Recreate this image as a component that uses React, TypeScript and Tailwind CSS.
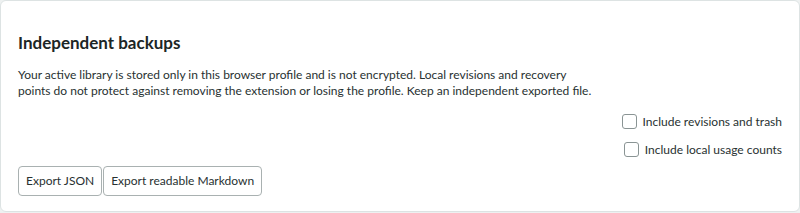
export default function App() {
  return (
    <div className="min-h-[213px] bg-[#eef1f1]" style={{ fontFamily: 'Lato, "Noto Sans", sans-serif' }}>
      <div className="h-[212px] rounded-[6px] border border-[#dde3e3] bg-white px-[17px] pt-[31px]">
        <h2 className="text-[17px] font-bold leading-[22px] text-[#1c2626]">Independent backups</h2>
        <p className="mt-[13px] text-[12px] leading-[16px] text-[#283131]">
          Your active library is stored only in this browser profile and is not encrypted. Local revisions and recovery
          <br />
          points do not protect against removing the extension or losing the profile. Keep an independent exported file.
        </p>
        <div className="mt-[15px] flex flex-col items-end gap-[13px]">
          <label className="flex items-center gap-[6px] text-[12px] leading-[14px] text-[#283131]">
            <span className="h-[15px] w-[15px] rounded-[3px] border border-[#8a9494] bg-white" />
            Include revisions and trash
          </label>
          <label className="flex items-center gap-[6px] text-[12px] leading-[14px] text-[#283131]">
            <span className="h-[15px] w-[15px] rounded-[3px] border border-[#8a9494] bg-white" />
            Include local usage counts
          </label>
        </div>
        <div className="mt-[9px] flex gap-[1px]">
          <button className="h-[30px] rounded-[4px] border border-[#a9b1b1] bg-white px-[7px] text-[12px] text-[#283131]">
            Export JSON
          </button>
          <button className="h-[30px] rounded-[4px] border border-[#a9b1b1] bg-white px-[7px] text-[12px] text-[#283131]">
            Export readable Markdown
          </button>
        </div>
      </div>
    </div>
  )
}
